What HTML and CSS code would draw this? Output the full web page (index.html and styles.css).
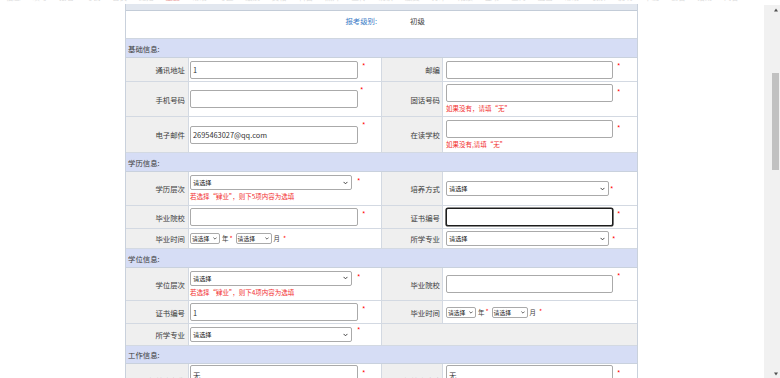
FILE: index.html
```html
<!DOCTYPE html>
<html lang="zh-CN">
<head>
<meta charset="utf-8">
<title>报名信息填写</title>
<link rel="stylesheet" href="styles.css">
</head>
<body>
<div class="screen">
  <main class="page">
    <div class="clip-row">
      <span>信息</span><span>填写</span><span>报名</span><span>考试</span><span>首页</span><span>通知</span><span class="hot">重要</span><span>帮助</span><span>考区</span><span>级别</span><span>资格</span><span>科目</span><span>照片</span><span>上传</span><span>确认</span><span>缴费</span><span>打印</span><span>成绩</span><span>证书</span><span>查询</span><span>退出</span><span>帮助</span><span>联系</span><span>说明</span><span>下载</span><span>公告</span><span>指南</span><span>问答</span>
    </div>

    <div class="sheet">
      <div class="sheet-top"></div>

      <div class="level-row">
        <span class="level-label">报考级别:</span>
        <span class="level-value">初级</span>
      </div>

      <div class="section">基础信息:</div>

      <div class="row r24">
        <div class="lbl">通讯地址</div>
        <div class="fld"><input class="ipt wl" type="text" value="1"><span class="req">*</span></div>
        <div class="lbl">邮编</div>
        <div class="fld"><input class="ipt wr" type="text" value=""><span class="req">*</span></div>
      </div>

      <div class="row r35">
        <div class="lbl">手机号码</div>
        <div class="fld"><input class="ipt wl" type="text" value=""><span class="req near">*</span></div>
        <div class="lbl">固话号码</div>
        <div class="fld stack">
          <div class="line"><input class="ipt wr" type="text" value=""><span class="req">*</span></div>
          <div class="hint">如果没有，请填“无”</div>
        </div>
      </div>

      <div class="row r36">
        <div class="lbl">电子邮件</div>
        <div class="fld"><input class="ipt wl" type="text" value="2695463027@qq.com"><span class="req">*</span></div>
        <div class="lbl">在读学校</div>
        <div class="fld stack">
          <div class="line"><input class="ipt wr" type="text" value=""><span class="req">*</span></div>
          <div class="hint">如果没有,请填“无”</div>
        </div>
      </div>

      <div class="section">学历信息:</div>

      <div class="row r34">
        <div class="lbl">学历层次</div>
        <div class="fld stack">
          <div class="line">
            <span class="sel sl"><span class="sel-text">请选择</span><svg class="chev" viewBox="0 0 6 4"><path d="M1 1l2 2 2-2"/></svg></span><span class="req wide">*</span>
          </div>
          <div class="hint">若选择“肄业”，则下5项内容为选填</div>
        </div>
        <div class="lbl">培养方式</div>
        <div class="fld">
          <span class="sel sr"><span class="sel-text">请选择</span><svg class="chev" viewBox="0 0 6 4"><path d="M1 1l2 2 2-2"/></svg></span><span class="req tight">*</span>
        </div>
      </div>

      <div class="row r23">
        <div class="lbl">毕业院校</div>
        <div class="fld"><input class="ipt wl" type="text" value=""><span class="req">*</span></div>
        <div class="lbl">证书编号</div>
        <div class="fld"><input class="ipt wr focus" type="text" value=""><span class="req">*</span></div>
      </div>

      <div class="row r20">
        <div class="lbl">毕业时间</div>
        <div class="fld">
          <div class="date">
            <span class="sel small s1"><span class="sel-text">请选择</span><svg class="chev" viewBox="0 0 6 4"><path d="M1 1l2 2 2-2"/></svg></span>
            <span class="unit">年</span><span class="req mini">*</span>
            <span class="sel small s2"><span class="sel-text">请选择</span><svg class="chev" viewBox="0 0 6 4"><path d="M1 1l2 2 2-2"/></svg></span>
            <span class="unit">月</span><span class="req after">*</span>
          </div>
        </div>
        <div class="lbl">所学专业</div>
        <div class="fld">
          <span class="sel sr"><span class="sel-text">请选择</span><svg class="chev" viewBox="0 0 6 4"><path d="M1 1l2 2 2-2"/></svg></span><span class="req mid">*</span>
        </div>
      </div>

      <div class="section">学位信息:</div>

      <div class="row r33">
        <div class="lbl">学位层次</div>
        <div class="fld stack">
          <div class="line">
            <span class="sel sl"><span class="sel-text">请选择</span><svg class="chev" viewBox="0 0 6 4"><path d="M1 1l2 2 2-2"/></svg></span><span class="req wide">*</span>
          </div>
          <div class="hint">若选择“肄业”，则下4项内容为选填</div>
        </div>
        <div class="lbl">毕业院校</div>
        <div class="fld"><input class="ipt wr" type="text" value=""><span class="req">*</span></div>
      </div>

      <div class="row r23">
        <div class="lbl">证书编号</div>
        <div class="fld"><input class="ipt wl" type="text" value="1"><span class="req">*</span></div>
        <div class="lbl">毕业时间</div>
        <div class="fld">
          <div class="date">
            <span class="sel small s1"><span class="sel-text">请选择</span><svg class="chev" viewBox="0 0 6 4"><path d="M1 1l2 2 2-2"/></svg></span>
            <span class="unit">年</span><span class="req mini">*</span>
            <span class="sel small s2"><span class="sel-text">请选择</span><svg class="chev" viewBox="0 0 6 4"><path d="M1 1l2 2 2-2"/></svg></span>
            <span class="unit">月</span><span class="req after">*</span>
          </div>
        </div>
      </div>

      <div class="row r22">
        <div class="lbl">所学专业</div>
        <div class="fld">
          <span class="sel sl"><span class="sel-text">请选择</span><svg class="chev" viewBox="0 0 6 4"><path d="M1 1l2 2 2-2"/></svg></span><span class="req wide">*</span>
        </div>
        <div class="blank"></div>
      </div>

      <div class="section s18">工作信息:</div>

      <div class="row r33">
        <div class="lbl">工作单位名称</div>
        <div class="fld stack">
          <div class="line"><input class="ipt wl" type="text" value="无"><span class="req">*</span></div>
          <div class="hint">如果没有，请填“无”</div>
        </div>
        <div class="lbl">工作单位地址</div>
        <div class="fld stack">
          <div class="line"><input class="ipt wr" type="text" value="无"><span class="req">*</span></div>
          <div class="hint">如果没有，请填“无”</div>
        </div>
      </div>
    </div>
  </main>

  <aside class="scrollbar" aria-hidden="true">
    <svg class="arrow up" viewBox="0 0 16 12"><polygon points="10,6.5 12,3.5 14,6.5"/></svg>
    <div class="thumb"></div>
    <svg class="arrow down" viewBox="0 0 16 8"><polygon points="10,2.5 12,5.5 14,2.5"/></svg>
  </aside>
</div>
</body>
</html>
```

FILE: styles.css
```css
* {
  box-sizing: border-box;
  margin: 0;
  padding: 0;
}

html, body {
  background: #fff;
}

body {
  font-family: "Microsoft YaHei", "Noto Sans CJK SC", "Noto Sans", sans-serif;
  font-size: 7.4px;
  color: #3a3a3a;
  overflow: hidden;
}

.screen {
  display: flex;
  width: 780px;
  height: 378px;
  overflow: hidden;
}

.page {
  flex: 1;
  min-width: 0;
  overflow: hidden;
}

/* cut-off row of the content above */
.clip-row {
  display: flex;
  height: 4px;
  overflow: hidden;
}

.clip-row span {
  flex: none;
  width: 26.6px;
  line-height: 10px;
  margin-top: -8.5px;
  text-align: center;
  color: #dadada;
}

.clip-row span.hot {
  color: #e99a9a;
}

/* the form sheet */
.sheet {
  margin-left: 125px;
  width: 513px;
  border-left: 1px solid #c9d1dc;
  border-right: 1px solid #c9d1dc;
}

.sheet-top {
  height: 7px;
  background: #e2e7ef;
  border-bottom: 1px solid #c3ccd8;
}

.level-row {
  display: flex;
  height: 28px;
  padding-top: 5px;
  line-height: 10px;
  border-bottom: 1px solid #cfd6e0;
}

.level-label {
  width: 251px;
  text-align: right;
  color: #3a7cc7;
}

.level-value {
  margin-left: 33px;
}

.section {
  display: flex;
  align-items: center;
  height: 19px;
  padding-left: 2px;
  background: #d6ddf5;
  border-bottom: 1px solid #c9d1dd;
}

.section.s18 {
  height: 18px;
}

.row {
  display: grid;
  grid-template-columns: 63px 193px 61px 194px;
  border-bottom: 1px solid #d3d9e2;
}

.r20 { height: 20px; }
.r22 { height: 22px; }
.r23 { height: 23px; }
.r24 { height: 24px; }
.r33 { height: 33px; }
.r34 { height: 34px; }
.r35 { height: 35px; }
.r36 { height: 36px; }

.lbl {
  display: flex;
  align-items: center;
  justify-content: flex-end;
  padding-right: 3px;
  background: #efefef;
  border-right: 1px solid #d3d9e2;
  white-space: nowrap;
}

.row > .lbl:nth-child(3) {
  padding-right: 2px;
}

.fld {
  display: flex;
  align-items: center;
  background: #fff;
}

.row > .fld:nth-child(2) {
  padding-left: 1px;
  border-right: 1px solid #d3d9e2;
}

.row > .fld:nth-child(4) {
  padding-left: 3px;
}

.blank {
  grid-column: span 2;
  background: #efefef;
}

.fld.stack {
  flex-direction: column;
  align-items: flex-start;
  justify-content: center;
}

.line {
  display: flex;
  align-items: center;
}

.hint {
  font-size: 6.5px;
  line-height: 12px;
  color: #f23030;
  white-space: nowrap;
}

/* text inputs */
.ipt {
  display: block;
  height: 18px;
  padding: 0 2px;
  border: 1px solid #aaaaaa;
  border-radius: 2px;
  background: #fff;
  font-family: inherit;
  font-size: 7.4px;
  color: #333;
  outline: none;
}

.ipt.wl { width: 168px; }
.ipt.wr { width: 167px; }

.ipt.focus {
  border-color: #1c1c1c;
  box-shadow: 0 0 0 0.6px #1c1c1c;
}

/* required mark */
.req {
  color: #f00;
  margin-left: 4px;
  line-height: 10px;
  align-self: flex-start;
  margin-top: 3px;
}

.req.near { margin-left: 2px; }
.req.wide { margin-left: 5px; margin-top: 1px; }
.req.tight { margin-left: 1px; margin-top: 0; align-self: center; }
.req.mid { margin-left: 3px; margin-top: 0; align-self: center; }

/* select boxes */
.sel {
  display: flex;
  align-items: center;
  justify-content: space-between;
  height: 15px;
  padding: 0 2px;
  border: 1px solid #aaaaaa;
  border-radius: 2px;
  background: #fff;
  font-size: 6.2px;
  color: #222;
  white-space: nowrap;
}

.sel.sl { width: 162px; }
.sel.sr { width: 163px; }

.chev {
  width: 5px;
  height: 4px;
  flex: none;
  margin-right: 1px;
}

.chev path {
  fill: none;
  stroke: #333;
  stroke-width: 1.1;
  stroke-linecap: round;
  stroke-linejoin: round;
}

/* graduation date selects */
.date {
  display: flex;
  align-items: center;
  font-size: 6.4px;
}

.sel.small {
  height: 11px;
  font-size: 5.8px;
  padding: 0 1px;
}

.sel.small .chev {
  width: 4px;
  height: 3px;
}

.sel.s1 { width: 30px; }
.sel.s2 { width: 36px; margin-left: 3px; }

.unit {
  margin-left: 2px;
}

.date .req {
  align-self: center;
  margin-top: -2px;
  font-size: 6.8px;
}

.date .req.mini { margin-left: 1px; }
.date .req.after { margin-left: 3px; }

/* fake browser scrollbar */
.scrollbar {
  flex: none;
  display: flex;
  flex-direction: column;
  width: 16px;
  height: 373px;
  margin-top: 5px;
  background: #f1f1f1;
}

.arrow {
  display: block;
  width: 16px;
  flex: none;
}

.arrow.up { height: 12px; }
.arrow.down { height: 8px; margin-top: auto; }

.arrow polygon {
  fill: #505050;
}

.thumb {
  width: 7px;
  height: 97px;
  margin-top: 56px;
  margin-left: 8px;
  background: #c1c1c1;
}
```
